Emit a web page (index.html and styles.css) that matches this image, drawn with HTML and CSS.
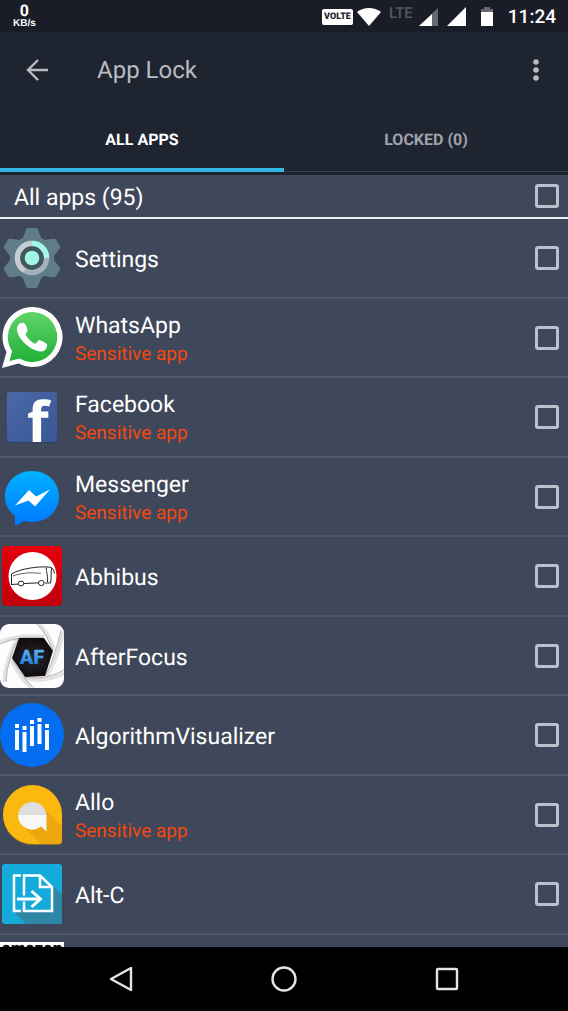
FILE: index.html
```html
<!DOCTYPE html>
<html lang="en">
<head>
    <meta charset="utf-8">
    <meta name="viewport" content="width=device-width, initial-scale=1">
    <title>App Lock</title>
    <link rel="stylesheet" href="styles.css">
</head>
<body>

    <div class="status-bar">
        <div class="net-speed">
            <span class="net-value">0</span>
            <span class="net-unit">KB/s</span>
        </div>
        <div class="status-icons">
            <span class="volte">VOLTE</span>
            <svg class="wifi" width="24" height="20" viewBox="0 0 24 20"><path d="M12 19L0 5C7-.5 17-.5 24 5z" fill="#fff"/></svg>
            <span class="lte">LTE</span>
            <svg width="20" height="20" viewBox="0 0 20 20"><path d="M20 1v18H1z" fill="#66686f"/><path d="M14 7v12H1z" fill="#fff"/></svg>
            <svg width="20" height="20" viewBox="0 0 20 20"><path d="M20 0v19H1z" fill="#fff"/></svg>
            <svg width="26" height="20" viewBox="0 0 26 20"><path d="M10 0h6v2h3v4H7V2h3z" fill="#66686f"/><path d="M7 5h12v14H7z" fill="#fff"/></svg>
            <span class="clock">11:24</span>
        </div>
    </div>

    <header class="app-bar">
        <button class="icon-btn" aria-label="Back">
            <svg width="24" height="24" viewBox="0 0 24 24" fill="none" stroke="#b9bbc2" stroke-width="2.4"><path d="M13 2L3 12l10 10M3 12h20"/></svg>
        </button>
        <h1>App Lock</h1>
        <button class="icon-btn" aria-label="More options">
            <svg width="24" height="24" viewBox="0 0 24 24" fill="#b9bbc2"><circle cx="12" cy="4" r="2.8"/><circle cx="12" cy="12" r="2.8"/><circle cx="12" cy="20" r="2.8"/></svg>
        </button>
    </header>

    <nav class="tabs">
        <button class="tab active">ALL APPS</button>
        <button class="tab">LOCKED (0)</button>
    </nav>

    <main>
        <div class="all-apps">
            <label for="check-all">All apps (95)</label>
            <input type="checkbox" id="check-all">
        </div>

        <ul class="app-list">
            <li class="app">
                <svg class="app-icon" viewBox="0 0 64 64">
                    <circle cx="32" cy="33" r="22" fill="#3a4450"/>
                    <g fill="#607d88">
                        <circle cx="32" cy="32" r="22"/>
                        <path id="tooth" d="M22 14l4-10q.6-2 2.500-2h7q2 0 2.500 2l4 10v36l-4 10q-.6 2-2.500 2h-7q-2 0-2.500-2l-4-10z"/>
                        <use href="#tooth" transform="rotate(60 32 32)"/>
                        <use href="#tooth" transform="rotate(120 32 32)"/>
                    </g>
                    <circle cx="32" cy="32" r="14.500" fill="none" stroke="#a4b1b9" stroke-width="5.500"/>
                    <path d="M24.700 44.500A14.500 14.500 0 0 1 32 17.500" fill="none" stroke="#c4ccd1" stroke-width="5.500"/>
                    <path d="M32 17.500A14.500 14.500 0 0 1 46.500 32" fill="none" stroke="#a0f7e5" stroke-width="5.500"/>
                    <circle cx="32" cy="32" r="11.800" fill="#41565f"/>
                    <circle cx="32" cy="32" r="7.300" fill="#a0f7e5"/>
                </svg>
                <div class="app-text">
                    <label class="app-name" for="app-1">Settings</label>
                </div>
                <input type="checkbox" id="app-1">
            </li>
            <li class="app">
                <svg class="app-icon" viewBox="0 0 64 64">
                    <defs>
                        <linearGradient id="wa" x1="0" y1="0" x2="0" y2="1"><stop offset="0" stop-color="#61d468"/><stop offset="1" stop-color="#20b038"/></linearGradient>
                    </defs>
                    <path d="M32.500 1a30 30 0 1 1-14 56.500L2 62l4.500-16A30 30 0 0 1 32.500 1z" fill="#fff"/>
                    <path d="M32.500 6a25 25 0 1 1-13 46.500L9.500 55l2.600-10A25 25 0 0 1 32.500 6z" fill="url(#wa)"/>
                    <path d="M21.500 17c-3 .5-4.700 3-4.500 7 .6 8 13 21 24 21.500 4 0 6-3 6.200-7-.2-1-5-3.500-7.800-4.500-1.600-.4-2.500 4-4.200 3.600-3.200-.8-8.600-6-9.600-9-.3-1.300 2.300-3 2-4.600-.4-1.600-1.800-5.500-2.800-6.600-.8-.7-2.200-.6-3.300-.4z" fill="#fff"/>
                </svg>
                <div class="app-text">
                    <label class="app-name" for="app-2">WhatsApp</label>
                    <span class="app-note">Sensitive app</span>
                </div>
                <input type="checkbox" id="app-2">
            </li>
            <li class="app">
                <svg class="app-icon" viewBox="0 0 64 64">
                    <defs>
                        <linearGradient id="fb" x1="0" y1="0" x2="1" y2="1"><stop offset="0" stop-color="#4a69a6"/><stop offset="1" stop-color="#3a5695"/></linearGradient>
                    </defs>
                    <rect x="7" y="8" width="50" height="50" rx="3" fill="#2f3d60"/>
                    <rect x="7" y="7" width="50" height="50" rx="3" fill="url(#fb)"/>
                    <text class="fb-letter" x="27" y="57">f</text>
                </svg>
                <div class="app-text">
                    <label class="app-name" for="app-3">Facebook</label>
                    <span class="app-note">Sensitive app</span>
                </div>
                <input type="checkbox" id="app-3">
            </li>
            <li class="app">
                <svg class="app-icon" viewBox="0 0 64 64">
                    <defs>
                        <linearGradient id="ms" x1="0" y1="0" x2="0" y2="1"><stop offset="0" stop-color="#00b2ff"/><stop offset="1" stop-color="#0078ff"/></linearGradient>
                    </defs>
                    <path d="M32 6c15.500 0 27 11 27 25.500S47.500 57 32 57q-4 0-7.500-1L15 61V51C8.500 46 5 39.500 5 31.500 5 17 16.500 6 32 6z" fill="url(#ms)"/>
                    <path d="M15 40.500L29 25l7 6.500L50 24.500 35 41.500l-6.500-6z" fill="#fff"/>
                </svg>
                <div class="app-text">
                    <label class="app-name" for="app-4">Messenger</label>
                    <span class="app-note">Sensitive app</span>
                </div>
                <input type="checkbox" id="app-4">
            </li>
            <li class="app">
                <svg class="app-icon" viewBox="0 0 64 64">
                    <defs>
                        <linearGradient id="ab" x1="0" y1="0" x2="0" y2="1"><stop offset="0" stop-color="#e4000c"/><stop offset="1" stop-color="#c0000c"/></linearGradient>
                    </defs>
                    <rect x="2" y="2" width="60" height="60" rx="4" fill="url(#ab)"/>
                    <circle cx="32.500" cy="32" r="24" fill="#fff"/>
                    <g fill="none" stroke="#222" stroke-width="1">
                        <path d="M11.500 41V30c5-3 12-5 19-6 8-1.200 17-1.600 21-.4 2 1.400 2.500 3 2.800 6"/>
                        <path d="M46.500 23.500c-.8 5 1.500 5 1 14.500M51.500 24c-.6 6 0 10-1 15h-5.500"/>
                        <path d="M11.500 40.500l7-.5M24 39.500l14-.6"/>
                        <path d="M13 32c8-3 18-4 28-2.500" stroke-width=".7"/>
                        <ellipse cx="21" cy="39.500" rx="2.800" ry="2.400"/>
                        <ellipse cx="41.300" cy="39" rx="2.800" ry="2.600"/>
                    </g>
                </svg>
                <div class="app-text">
                    <label class="app-name" for="app-5">Abhibus</label>
                </div>
                <input type="checkbox" id="app-5">
            </li>
            <li class="app">
                <svg class="app-icon" viewBox="0 0 64 64">
                    <defs>
                        <linearGradient id="af" x1="0" y1="0" x2="0" y2="1"><stop offset="0" stop-color="#6cc4ff"/><stop offset="1" stop-color="#1a6fd0"/></linearGradient>
                        <radialGradient id="lens"><stop offset="0" stop-color="#1d2c30"/><stop offset="1" stop-color="#150b0f"/></radialGradient>
                        <clipPath id="af-box"><rect width="64" height="64" rx="9"/></clipPath>
                    </defs>
                    <rect width="64" height="64" rx="9" fill="#fdfdfd"/>
                    <g clip-path="url(#af-box)" fill="none">
                        <path d="M44 13Q20 10 0 18M54 26Q49 10 39 0M46 53Q57 36 63 8M25 54q20 5 39-5M11 35q7 16 20 29M18 14Q6 34 4 58" stroke="#e2e2e2" stroke-width="4"/>
                        <path d="M44 14Q20 11 0 20M53 27Q47 10 37 0M45 52Q55 34 61 6M25 53q20 4 39-7M12 34q8 17 22 30M19 14Q7 34 6 58" stroke="#b4b4b4" stroke-width="1"/>
                    </g>
                    <path d="M19 14h25l9 13-8 25-20 1-13-19z" fill="url(#lens)"/>
                    <text class="af-letters" x="32" y="40" fill="url(#af)">AF</text>
                </svg>
                <div class="app-text">
                    <label class="app-name" for="app-6">AfterFocus</label>
                </div>
                <input type="checkbox" id="app-6">
            </li>
            <li class="app">
                <svg class="app-icon" viewBox="0 0 64 64">
                    <circle cx="32" cy="32" r="32" fill="#036ef0"/>
                    <path fill="#fff" d="M15 21h4v4h-4zM15 27h4v20h-4zM22.500 23h4v4h-4zM22.500 29h4v20h-4zM30 17h4v4h-4zM30 23h4v20h-4zM37.500 15h4v4h-4zM37.500 21h4v20h-4zM45 21h4v4h-4zM45 27h4v20h-4z"/>
                </svg>
                <div class="app-text">
                    <label class="app-name" for="app-7">AlgorithmVisualizer</label>
                </div>
                <input type="checkbox" id="app-7">
            </li>
            <li class="app">
                <svg class="app-icon" viewBox="0 0 64 64">
                    <path d="M32.500 3A29.500 29.500 0 0 1 62 32.500V58q0 4-4 4H32.500a29.500 29.500 0 0 1 0-59z" fill="#8a7030"/>
                    <path d="M32.500 2A29.500 29.500 0 0 1 62 31.500V57q0 4-4 4H32.500a29.500 29.500 0 0 1 0-59z" fill="#fbb90f"/>
                    <path d="M46 27l16 16v14q0 4-4 4H41L22 42z" fill="#eda70d"/>
                    <path d="M18 32a14.300 14.300 0 0 1 28.500 0z" fill="#dedede"/>
                    <path d="M18 32h28.500v16.500L41 43.500A14.300 14.300 0 0 1 18 32z" fill="#f7f7f7"/>
                </svg>
                <div class="app-text">
                    <label class="app-name" for="app-8">Allo</label>
                    <span class="app-note">Sensitive app</span>
                </div>
                <input type="checkbox" id="app-8">
            </li>
            <li class="app">
                <svg class="app-icon" viewBox="0 0 64 64">
                    <rect x="2" y="2" width="60" height="60" rx="3" fill="#14abdb"/>
                    <path d="M52 23l10 9v27q0 3-3 3H26L13 49h39z" fill="#2f87a8"/>
                    <path d="M24 14h16l12 11v24H24z" fill="#14abdb"/>
                    <path d="M14 14h10v35H14z" fill="#14abdb"/>
                    <g fill="none" stroke="#fff" stroke-width="2.500">
                        <path d="M21 13.500h-7V49h7"/>
                        <path d="M24 33.500v-20h16l12 11.500v24H24V39.500"/>
                        <path d="M40 13.500V25h12"/>
                        <path d="M17 37h23M31.500 29l9 8-9 8" stroke-width="3"/>
                    </g>
                </svg>
                <div class="app-text">
                    <label class="app-name" for="app-9">Alt-C</label>
                </div>
                <input type="checkbox" id="app-9">
            </li>
            <li class="app">
                <svg class="app-icon" viewBox="0 0 64 64">
                    <rect width="64" height="64" fill="#fff"/>
                    <text class="amazon" x="32" y="12">amazon</text>
                </svg>
                <div class="app-text"></div>
                <input type="checkbox" aria-label="Amazon">
            </li>
        </ul>
    </main>

    <footer class="nav-bar">
        <button aria-label="Back">
            <svg width="28" height="28" viewBox="0 0 28 28"><path d="M24 3v22L4 14z"/></svg>
        </button>
        <button aria-label="Home">
            <svg width="28" height="28" viewBox="0 0 28 28"><circle cx="14" cy="14" r="11.500"/></svg>
        </button>
        <button aria-label="Recent apps">
            <svg width="28" height="28" viewBox="0 0 28 28"><rect x="4" y="4" width="20" height="20" rx="1"/></svg>
        </button>
    </footer>

</body>
</html>
```
FILE: styles.css
```css
* {
    box-sizing: border-box;
}

body {
    margin: 0;
    height: 100vh;
    display: flex;
    flex-direction: column;
    font-family: Roboto, "Liberation Sans", sans-serif;
    text-rendering: geometricPrecision;
    color: #fff;
    background-color: #1f2530;
}

button {
    border: none;
    background: none;
    padding: 0;
    font-family: inherit;
    text-rendering: inherit;
    cursor: pointer;
}

svg {
    display: block;
    flex: none;
}

/* status bar */
.status-bar {
    flex: none;
    height: 32px;
    padding: 1px 12px 0 13px;
    display: flex;
    justify-content: space-between;
    align-items: center;
    background-color: #1a1d27;
}

.net-speed {
    display: flex;
    flex-direction: column;
    align-items: center;
    font-weight: 700;
}

.net-value {
    font-size: 16px;
    line-height: 14px;
}

.net-unit {
    font-family: "Liberation Sans", sans-serif;
    font-size: 10px;
    line-height: 11px;
}

.status-icons {
    display: flex;
    align-items: center;
    gap: 8px;
}

.volte {
    padding: 0 2px;
    border-radius: 2px;
    background-color: #fff;
    color: #1a1d27;
    font-size: 9px;
    font-weight: 900;
    line-height: 16px;
}

.wifi {
    margin-left: -4px;
}

.lte {
    margin-right: -3px;
    padding-bottom: 8px;
    color: #54575f;
    font-size: 15px;
    font-weight: 500;
    line-height: 16px;
}

.clock {
    font-size: 19px;
    font-weight: 500;
    line-height: 28px;
}

/* toolbar */
.app-bar {
    flex: none;
    height: 76px;
    padding: 0 20px 0 25px;
    display: flex;
    align-items: center;
}

.app-bar h1 {
    flex: 1;
    margin: 0 0 0 48px;
    color: #b9bbc2;
    font-size: 24px;
    font-weight: 400;
    line-height: 32px;
}

.tabs {
    flex: none;
    display: flex;
    height: 67px;
    padding-bottom: 3px;
}

.tab {
    flex: 1;
    border-bottom: 1px solid #3c404b;
    color: #a0a3ab;
    font-size: 16px;
    font-weight: 700;
}

.tab.active {
    padding-top: 3px;
    border-bottom: 4px solid #33b5e5;
    color: #fff;
}

/* list */
main {
    flex: 1;
    min-height: 0;
    overflow: hidden;
    background-color: #3f475a;
}

.all-apps {
    height: 44px;
    padding: 0 9px 0 14px;
    display: flex;
    justify-content: space-between;
    align-items: center;
    border-bottom: 2px solid #eceef2;
    font-size: 23px;
}

.all-apps label {
    padding-top: 2px;
}

.app-list {
    margin: 0;
    padding: 0;
    list-style: none;
}

.app {
    height: 79px;
    padding-right: 9px;
    display: flex;
    align-items: center;
    border-bottom: 2px solid #4f576a;
}

.app:nth-child(odd) {
    height: 80px;
}

.app-icon {
    width: 64px;
    height: 64px;
}

.app-text {
    flex: 1;
    padding: 4px 0 0 11px;
    display: flex;
    flex-direction: column;
}

.app-name {
    font-size: 23px;
    line-height: 28px;
}

.app-note {
    color: #f4480c;
    font-size: 19px;
    line-height: 28px;
}

input[type="checkbox"] {
    appearance: none;
    width: 24px;
    height: 24px;
    margin: 0;
    border: 3px solid #bcc1cd;
    border-radius: 3px;
}

input[type="checkbox"]:checked {
    background-color: #33b5e5;
}

.fb-letter {
    fill: #fff;
    font-family: "Open Sans", sans-serif;
    font-size: 56px;
    font-weight: 700;
}

.af-letters {
    font-size: 20px;
    font-weight: 900;
    text-anchor: middle;
}

.amazon {
    fill: #111;
    font-size: 17px;
    font-weight: 900;
    text-anchor: middle;
}

/* system navigation */
.nav-bar {
    flex: none;
    height: 64px;
    padding: 0 39px;
    display: flex;
    background-color: #000;
}

.nav-bar button {
    flex: 1;
    display: flex;
    justify-content: center;
    align-items: center;
}

.nav-bar svg {
    fill: none;
    stroke: #e4e4e4;
    stroke-width: 2.4;
    stroke-linejoin: round;
}
```
